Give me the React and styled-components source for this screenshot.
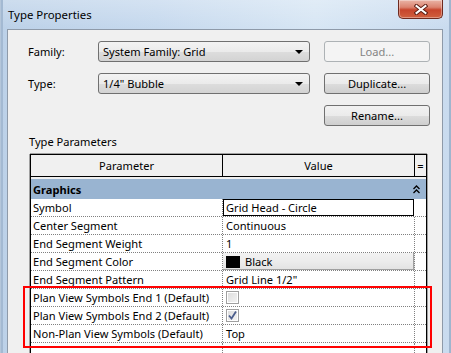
import React from "react";
import styled, { createGlobalStyle } from "styled-components";

const GlobalStyle = createGlobalStyle`
  html, body {
    margin: 0;
    padding: 0;
  }
  body {
    width: 451px;
    height: 353px;
    overflow: hidden;
    font-family: "Noto Sans", "Open Sans", sans-serif;
    font-size: 11.1px;
    color: #000;
  }
`;

const rows = [
  { name: "Symbol", value: "Grid Head - Circle", kind: "edit" },
  { name: "Center Segment", value: "Continuous" },
  { name: "End Segment Weight", value: "1" },
  { name: "End Segment Color", value: "Black", kind: "color" },
  { name: "End Segment Pattern", value: 'Grid Line 1/2"' },
  { name: "Plan View Symbols End 1 (Default)", kind: "check", checked: false },
  { name: "Plan View Symbols End 2 (Default)", kind: "check", checked: true },
  { name: "Non-Plan View Symbols (Default)", value: "Top" },
];

const App = () => {
  return (
    <Window>
      <GlobalStyle />
      <TitleBar>
        <Title>Type Properties</Title>
        <CloseButton>
          <svg width="14" height="11" viewBox="0 0 14 11">
            <path
              d="M2.5 2 L11.5 9 M11.5 2 L2.5 9"
              stroke="#5a1c12"
              strokeWidth="4"
              strokeLinecap="square"
            />
            <path
              d="M2.5 2 L11.5 9 M11.5 2 L2.5 9"
              stroke="#fff"
              strokeWidth="2"
              strokeLinecap="square"
            />
          </svg>
        </CloseButton>
      </TitleBar>
      <Client>
        <TopGrid>
          <Label>Family:</Label>
          <Combo>
            <span>System Family: Grid</span>
            <Arrow />
          </Combo>
          <Button disabled>Load...</Button>
          <Label>Type:</Label>
          <Combo>
            <span>1/4" Bubble</span>
            <Arrow />
          </Combo>
          <Button>Duplicate...</Button>
          <Button $col={3}>Rename...</Button>
        </TopGrid>
        <SectionLabel>Type Parameters</SectionLabel>
        <Table>
          <HeaderRow>
            <HeadCell>Parameter</HeadCell>
            <HeadCell>Value</HeadCell>
            <HeadCell $last>=</HeadCell>
          </HeaderRow>
          <GroupGap />
          <GroupRow>
            <span>Graphics</span>
            <svg width="7" height="9" viewBox="0 0 7 9">
              <path d="M0.5 4 L3.5 1 L6.5 4 M0.5 8 L3.5 5 L6.5 8" stroke="#000" strokeWidth="1.3" fill="none" />
            </svg>
          </GroupRow>
          {rows.map((r) => (
            <Row key={r.name}>
              <ParamCell>{r.name}</ParamCell>
              <ValueCell $kind={r.kind}>
                {r.kind === "color" && <Swatch />}
                {r.kind === "check" ? (
                  <CheckBox>
                    {r.checked && (
                      <svg width="11" height="11" viewBox="0 0 11 11">
                        <path d="M2 5.5 L4.5 8.5 L9 1.5" stroke="#4b5d8c" strokeWidth="1.8" fill="none" />
                      </svg>
                    )}
                  </CheckBox>
                ) : (
                  <span>{r.value}</span>
                )}
              </ValueCell>
              <EndCell />
            </Row>
          ))}
          <Row $empty>
            <ParamCell />
            <ValueCell />
            <EndCell />
          </Row>
        </Table>
      </Client>
      <Highlight />
    </Window>
  );
};

export default App;

const Window = styled.div`
  position: relative;
  width: 451px;
  height: 353px;
  box-sizing: border-box;
  display: flex;
  flex-direction: column;
  padding: 0 8px 0 7px;
  background: linear-gradient(180deg, rgba(255, 255, 255, 0.25), rgba(255, 255, 255, 0) 28px),
    linear-gradient(90deg, #bcd1e8 0%, #c6d9ee 35%, #d7e6f4 70%, #c9dbef 100%);
  box-shadow: inset 1px 0 0 #b4c6da, inset 3px 0 0 #a3b9d2, inset -2px 0 0 #9fb5ce;
  overflow: hidden;
`;

const TitleBar = styled.div`
  height: 29px;
  display: flex;
  align-items: flex-start;
  flex-shrink: 0;
`;

const Title = styled.div`
  margin: 7px 0 0 1px;
  line-height: 16px;
  font-size: 11.4px;
`;

const CloseButton = styled.div`
  margin-left: auto;
  width: 45px;
  height: 19px;
  box-sizing: border-box;
  border: 1px solid #6e2a1f;
  border-top: none;
  border-radius: 0 0 5px 5px;
  background: linear-gradient(180deg, #eab4a6 0%, #db8470 40%, #c7452c 55%, #d0603f 100%);
  box-shadow: inset 0 0 0 1px rgba(255, 255, 255, 0.35);
  display: flex;
  align-items: center;
  justify-content: center;
`;

const Client = styled.div`
  flex: 1;
  background: #f0f0f0;
  border: 1px solid #8e9aa9;
  border-bottom: none;
  display: flex;
  flex-direction: column;
`;

const TopGrid = styled.div`
  display: grid;
  grid-template-columns: 56px 212px 106px;
  grid-auto-rows: 21px;
  column-gap: 14px;
  row-gap: 11px;
  padding: 11px 0 0 20px;
`;

const Label = styled.div`
  display: flex;
  align-items: center;
`;

const Combo = styled.div`
  box-sizing: border-box;
  display: flex;
  align-items: center;
  justify-content: space-between;
  padding: 0 6px 0 4px;
  border: 1px solid #707070;
  border-radius: 3px;
  background: linear-gradient(180deg, #f3f3f3 0%, #ebebeb 50%, #dddddd 51%, #d3d3d3 100%);
`;

const Arrow = styled.div`
  width: 0;
  height: 0;
  border-left: 4px solid transparent;
  border-right: 4px solid transparent;
  border-top: 4px solid #000;
  margin-top: 1px;
`;

const Button = styled.div`
  grid-column: ${(p) => p.$col || "auto"};
  box-sizing: border-box;
  display: flex;
  align-items: center;
  justify-content: center;
  border: 1px solid ${(p) => (p.disabled ? "#adb2b5" : "#707070")};
  border-radius: 3px;
  color: ${(p) => (p.disabled ? "#838383" : "#000")};
  background: ${(p) =>
    p.disabled
      ? "#f4f4f4"
      : "linear-gradient(180deg, #f2f2f2 0%, #ebebeb 50%, #dddddd 51%, #cfcfcf 100%)"};
`;

const SectionLabel = styled.div`
  margin: 8px 0 0 21px;
  line-height: 15px;
`;

const Table = styled.div`
  margin: 5px 0 0 22px;
  width: 397px;
  box-sizing: border-box;
  flex: 1;
  background: #fff;
  border: 1px solid #000;
  border-bottom: none;
  box-shadow: 0 -1px 0 #a0a0a0, -1px 0 0 #a0a0a0, 1px 0 0 #a0a0a0;
`;

const HeaderRow = styled.div`
  display: grid;
  grid-template-columns: 192px 192px 1fr;
  height: 22px;
  box-sizing: border-box;
  border-bottom: 1px solid #000;
  background: #f0f0f0;
`;

const HeadCell = styled.div`
  display: flex;
  align-items: center;
  justify-content: center;
  border-right: ${(p) => (p.$last ? "none" : "1px solid #000")};
`;

const GroupGap = styled.div`
  height: 2px;
  background: #f0f0f0;
`;

const GroupRow = styled.div`
  height: 20px;
  display: flex;
  align-items: center;
  justify-content: space-between;
  padding: 0 6px 0 2px;
  background: #99b4d1;
  font-weight: bold;
`;

const Row = styled.div`
  display: grid;
  grid-template-columns: 192px 192px 1fr;
  height: ${(p) => (p.$empty ? "20px" : "18px")};
  box-sizing: border-box;
  border-bottom: ${(p) => (p.$empty ? "none" : "1px dotted #808080")};
`;

const ParamCell = styled.div`
  display: flex;
  align-items: center;
  padding-left: 2px;
  border-right: 1px dotted #808080;
  white-space: nowrap;
`;

const ValueCell = styled.div`
  display: flex;
  align-items: center;
  gap: 5px;
  padding-left: ${(p) => (p.$kind === "color" ? "2px" : "3px")};
  border-right: 1px dotted #808080;
  box-sizing: border-box;
  white-space: nowrap;
  ${(p) =>
    p.$kind === "edit" &&
    `
    border: 1px solid #000;
    padding-left: 2px;
    margin-right: 1px;
  `}
  ${(p) =>
    p.$kind === "color" &&
    `
    background: linear-gradient(180deg, #f2f2f2 0%, #ececec 50%, #e2e2e2 100%);
    box-shadow: inset -1px -1px 0 #a0a0a0;
  `}
`;

const EndCell = styled.div``;

const Swatch = styled.div`
  width: 14px;
  height: 12px;
  background: #000;
  margin-left: 1px;
`;

const CheckBox = styled.div`
  width: 13px;
  height: 13px;
  box-sizing: border-box;
  border: 1px solid #a0a0a0;
  background: linear-gradient(135deg, #dcdcdc 0%, #f4f4f4 100%);
  box-shadow: inset 0 0 0 1px #fff;
  display: flex;
  align-items: center;
  justify-content: center;
`;

const Highlight = styled.div`
  position: absolute;
  left: 23px;
  top: 286px;
  width: 409px;
  height: 62px;
  box-sizing: border-box;
  border: 2px solid #f00;
  pointer-events: none;
`;
